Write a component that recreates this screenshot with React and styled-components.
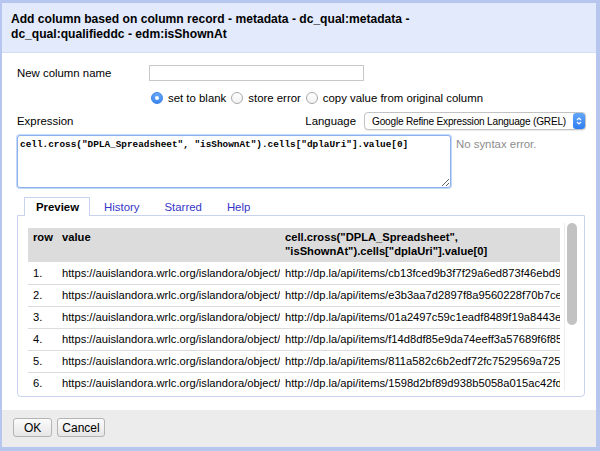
import React from "react";
import styled, { createGlobalStyle } from "styled-components";

const GlobalStyle = createGlobalStyle`
  * { box-sizing: border-box; }
  body {
    margin: 0;
    font-family: "Liberation Sans", Arial, sans-serif;
    font-size: 11.4px;
    color: #000;
    background: #fff;
  }
`;

const Dialog = styled.div`
  width: 600px;
  height: 451px;
  display: flex;
  flex-direction: column;
  border-style: solid;
  border-color: #b6c6ee;
  border-width: 3px 4px 4px 2px;
  background: #fff;
  overflow: hidden;
`;

const Header = styled.div`
  background: #e2eafc;
  border-bottom: 1px solid #d3def6;
  padding: 9px 10px 10px 9px;
  height: 50px;
`;

const Title = styled.h1`
  margin: 0;
  max-width: 480px;
  font-size: 12.1px;
  line-height: 15px;
  font-weight: bold;
`;

const Body = styled.div`
  flex: 1;
  display: flex;
  flex-direction: column;
  padding: 10px 10px 0 15px;
`;

const FieldRow = styled.div`
  display: flex;
  align-items: center;
  height: 20px;
  margin-top: ${(p) => p.gap || 0}px;
  padding-left: ${(p) => p.indent || 0}px;
`;

const Label = styled.span`
  width: 132px;
  flex: none;
`;

const TextInput = styled.div`
  width: 215px;
  height: 16px;
  border: 1px solid #c9c9c9;
  background: #fff;
`;

const RadioOption = styled.label`
  display: flex;
  align-items: center;
  gap: 5px;
  margin-right: 5px;
`;

const RadioDot = styled.span`
  width: 12px;
  height: 12px;
  border-radius: 50%;
  display: inline-flex;
  align-items: center;
  justify-content: center;
  border: 1px solid ${(p) => (p.checked ? "#3d82e6" : "#a9a9a9")};
  background: ${(p) =>
    p.checked ? "linear-gradient(#6aa9f8, #3a86f0)" : "linear-gradient(#fff, #f2f2f2)"};
  &::after {
    content: "";
    display: ${(p) => (p.checked ? "block" : "none")};
    width: 4px;
    height: 4px;
    border-radius: 50%;
    background: #fff;
  }
`;

const Spacer = styled.div`
  flex: 1;
`;

const LangLabel = styled.span`
  margin-right: 8px;
`;

const Select = styled.div`
  width: 222px;
  flex: none;
  height: 18px;
  border: 1px solid #c3c3c3;
  border-radius: 4px;
  display: flex;
  align-items: center;
  padding-left: 7px;
  background: #fff;
  font-size: 10.1px;
  letter-spacing: -0.2px;
  white-space: nowrap;
  box-shadow: 0 1px 1px rgba(0, 0, 0, 0.08);
`;

const SelectText = styled.span`
  flex: 1;
  min-width: 0;
`;

const Stepper = styled.span`
  flex: none;
  width: 12px;
  height: 16px;
  border-radius: 3px;
  background: linear-gradient(#62a6fa, #2f7df2);
  display: flex;
  align-items: center;
  justify-content: center;
`;

const ExprRow = styled.div`
  display: flex;
  align-items: flex-start;
  margin-top: 4px;
  gap: 5px;
`;

const ExprInput = styled.textarea`
  width: 434px;
  height: 53px;
  margin: 0;
  padding: 3px 2px;
  border: 1px solid #8db0ef;
  border-radius: 3px;
  box-shadow: 0 0 0 1px #c6d8f8;
  font-family: "Liberation Mono", "Courier New", monospace;
  font-weight: bold;
  font-size: 9.4px;
  line-height: 12px;
  color: #000;
  outline: none;
  resize: both;
`;

const Status = styled.span`
  color: #8c8c8c;
  margin-top: 3px;
`;

const TabBar = styled.div`
  display: flex;
  gap: 2px;
  margin-top: 9px;
  padding-left: 7px;
  height: 18px;
  position: relative;
  z-index: 1;
`;

const Tab = styled.div`
  padding: 0 10px 0 11px;
  height: ${(p) => (p.active ? 19 : 18)}px;
  display: flex;
  align-items: center;
  font-weight: ${(p) => (p.active ? "bold" : "normal")};
  color: ${(p) => (p.active ? "#000" : "#3434c8")};
  background: ${(p) => (p.active ? "#fff" : "transparent")};
  border: 1px solid ${(p) => (p.active ? "#c8d4ef" : "transparent")};
  border-bottom: none;
`;

const Panel = styled.div`
  height: 182px;
  width: 568px;
  border: 1px solid #c8d4ef;
  border-radius: 0 0 4px 4px;
  padding: 7px 4px 5px 10px;
  display: flex;
`;

const TableWrap = styled.div`
  width: 533px;
  padding-top: 5px;
  overflow: hidden;
`;

const Table = styled.table`
  width: 533px;
  table-layout: fixed;
  border-collapse: collapse;
  font-size: 11.2px;
`;

const HeadCell = styled.th`
  background: #dcdcdc;
  font-weight: bold;
  text-align: left;
  vertical-align: top;
  padding: 2px 5px 4px 5px;
  line-height: 14px;
  width: ${(p) => p.w || "auto"};
`;

const Row = styled.tr`
  height: 22px;
  & + & {
    border-top: 1px solid #dcdcdc;
  }
`;

const Cell = styled.td`
  padding: 0 5px 0 5px;
  white-space: nowrap;
  overflow: hidden;
  text-overflow: clip;
`;

const ScrollTrack = styled.div`
  width: 16px;
  margin-left: 4px;
  padding: 0 2px;
  border-left: 1px solid #ececec;
`;

const ScrollThumb = styled.div`
  width: 10px;
  height: 102px;
  border-radius: 5px;
  background: #c2c2c2;
`;

const Footer = styled.div`
  height: 37px;
  background: #ececec;
  display: flex;
  align-items: flex-start;
  gap: 5px;
  padding: 8px 0 0 11px;
`;

const Button = styled.button`
  height: 19px;
  padding: 0 ${(p) => p.pad || 4}px;
  font-family: "Liberation Sans", Arial, sans-serif;
  font-size: 12px;
  color: #000;
  border: 1px solid #b4b4b4;
  border-radius: 3px;
  background: linear-gradient(#fbfbfb, #e6e6e6);
`;

const rows = [
  "cb13fced9b3f7f29a6ed873f46ebd9a",
  "e3b3aa7d2897f8a9560228f70b7ce2",
  "01a2497c59c1eadf8489f19a8443e7",
  "f14d8df85e9da74eeff3a57689f6f85",
  "811a582c6b2edf72fc7529569a7251",
  "1598d2bf89d938b5058a015ac42fd6",
];

const Radio = ({ checked, children }) => (
  <RadioOption>
    <RadioDot checked={checked} />
    {children}
  </RadioOption>
);

export default function App() {
  return (
    <>
      <GlobalStyle />
      <Dialog>
        <Header>
          <Title>
            Add column based on column record - metadata - dc_qual:metadata -
            dc_qual:qualifieddc - edm:isShownAt
          </Title>
        </Header>
        <Body>
          <FieldRow>
            <Label>New column name</Label>
            <TextInput />
          </FieldRow>
          <FieldRow gap={5} indent={134}>
            <Radio checked>set to blank</Radio>
            <Radio>store error</Radio>
            <Radio>copy value from original column</Radio>
          </FieldRow>
          <FieldRow gap={3}>
            <span>Expression</span>
            <Spacer />
            <LangLabel>Language</LangLabel>
            <Select>
              <SelectText>Google Refine Expression Language (GREL)</SelectText>
              <Stepper>
                <svg width="6" height="10" viewBox="0 0 6 10">
                  <path
                    d="M1 4 L3 2 L5 4 M1 6 L3 8 L5 6"
                    fill="none"
                    stroke="#fff"
                    strokeWidth="1.2"
                  />
                </svg>
              </Stepper>
            </Select>
          </FieldRow>
          <ExprRow>
            <ExprInput
              readOnly
              spellCheck={false}
              value={'cell.cross("DPLA_Spreadsheet", "isShownAt").cells["dplaUri"].value[0]'}
            />
            <Status>No syntax error.</Status>
          </ExprRow>
          <TabBar>
            <Tab active>Preview</Tab>
            <Tab>History</Tab>
            <Tab>Starred</Tab>
            <Tab>Help</Tab>
          </TabBar>
          <Panel>
            <TableWrap>
              <Table>
                <thead>
                  <tr>
                    <HeadCell w="29px">row</HeadCell>
                    <HeadCell w="223px">value</HeadCell>
                    <HeadCell>
                      cell.cross("DPLA_Spreadsheet",
                      "isShownAt").cells["dplaUri"].value[0]
                    </HeadCell>
                  </tr>
                </thead>
                <tbody>
                  {rows.map((id, i) => (
                    <Row key={id}>
                      <Cell>{i + 1}.</Cell>
                      <Cell>https://auislandora.wrlc.org/islandora/object/a</Cell>
                      <Cell>http://dp.la/api/items/{id}</Cell>
                    </Row>
                  ))}
                </tbody>
              </Table>
            </TableWrap>
            <ScrollTrack>
              <ScrollThumb />
            </ScrollTrack>
          </Panel>
        </Body>
        <Footer>
          <Button pad={10}>OK</Button>
          <Button>Cancel</Button>
        </Footer>
      </Dialog>
    </>
  );
}
